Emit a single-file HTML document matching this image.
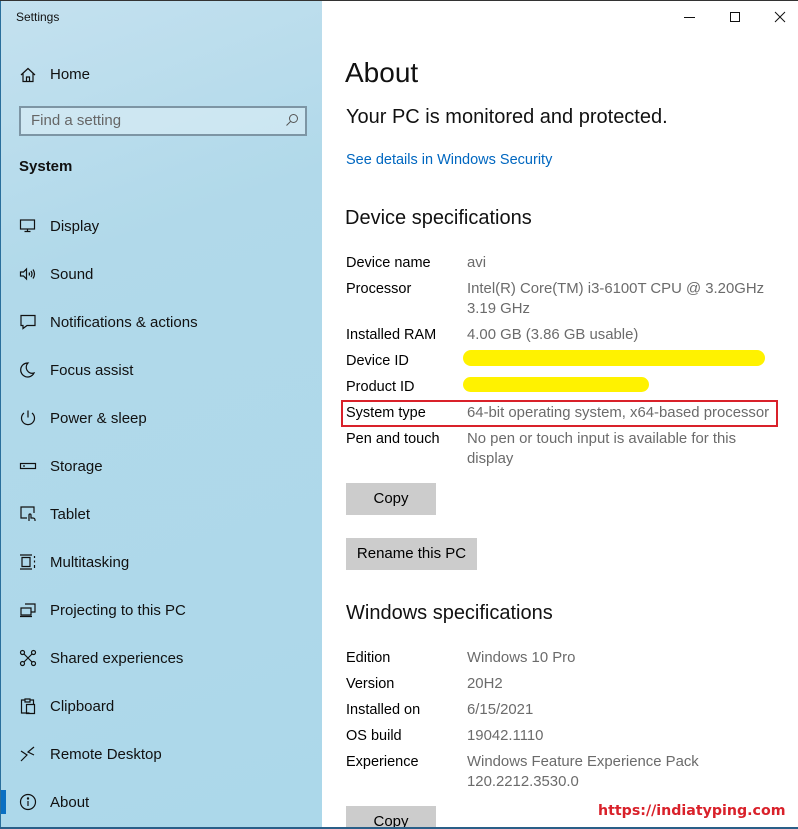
<!DOCTYPE html>
<html><head><meta charset="utf-8"><style>
*{margin:0;padding:0;box-sizing:border-box}
body{width:798px;height:829px;overflow:hidden;font-family:"Segoe UI","Liberation Sans",sans-serif;background:#fff;position:relative;color:#000}
#side{position:absolute;left:0;top:0;width:322px;height:829px;background:linear-gradient(160deg,#c4e1ef 0%,#b1d9ea 30%,#acd8ea 100%);border-left:1px solid #2a6f9c}
.t{position:absolute;white-space:nowrap}
.nav{position:absolute;left:49px;font-size:15px;color:#111;white-space:nowrap;line-height:20px}
.ic{position:absolute;left:18px;width:18px;height:18px}
.lab{position:absolute;left:346px;font-size:14.5px;line-height:20px;white-space:nowrap}
.val{position:absolute;left:467px;font-size:14.9px;line-height:20px;color:#6b6b6b;white-space:nowrap}
.btn{position:absolute;left:346px;background:#cccccc;font-size:15px;text-align:center;line-height:32px;height:32px}
</style></head><body>
<div id="side">
<div class="t" style="left:15px;top:10px;font-size:12px;color:#111">Settings</div>
<svg class="ic" style="top:66px" viewBox="0 0 18 18" fill="none" stroke="#111" stroke-width="1.2"><path d="M2 9L9 2.5 16 9M4 7.5V15.5H14V7.5M7.5 15.5V11H10.5V15.5"/></svg>
<div class="nav" style="top:65px">Home</div>
<div style="position:absolute;left:18px;top:106px;width:288px;height:30px;border:2px solid #7d95a4;background:rgba(220,238,246,.6)"></div>
<div class="t" style="left:30px;top:112px;font-size:15px;color:#666">Find a setting</div>
<svg style="position:absolute;left:284px;top:113px" width="14" height="14" viewBox="0 0 14 14" fill="none" stroke="#555" stroke-width="1"><circle cx="8.5" cy="5.5" r="4"/><path d="M5.5 8.5L1.5 12.5"/></svg>
<div class="t" style="left:18px;top:158px;font-size:15px;font-weight:bold;color:#111">System</div>
<svg class="ic" style="top:217px" viewBox="0 0 18 18" fill="none" stroke="#111" stroke-width="1.2"><rect x="1.5" y="3" width="14" height="9"/><path d="M8.5 12v2.5M5.5 14.5h6"/></svg>
<div class="nav" style="top:217px">Display</div>
<svg class="ic" style="top:265px" viewBox="0 0 18 18" fill="none" stroke="#111" stroke-width="1.2"><path d="M1.5 7h3l3-3v10l-3-3h-3z M10 7.5q1 1.5 0 3 M12 6q2 3 0 6 M14 4.5q3 4.5 0 9"/></svg>
<div class="nav" style="top:265px">Sound</div>
<svg class="ic" style="top:313px" viewBox="0 0 18 18" fill="none" stroke="#111" stroke-width="1.2"><path d="M2 2.5h14v10H8l-4 3v-3H2z"/></svg>
<div class="nav" style="top:313px">Notifications &amp; actions</div>
<svg class="ic" style="top:361px" viewBox="0 0 18 18" fill="none" stroke="#111" stroke-width="1.2"><path d="M9 2a7 7 0 1 0 6 10A6 6 0 0 1 9 2z"/></svg>
<div class="nav" style="top:361px">Focus assist</div>
<svg class="ic" style="top:409px" viewBox="0 0 18 18" fill="none" stroke="#111" stroke-width="1.2"><path d="M9 1.5v7M5 4a6.5 6.5 0 1 0 8 0"/></svg>
<div class="nav" style="top:409px">Power &amp; sleep</div>
<svg class="ic" style="top:457px" viewBox="0 0 18 18" fill="none" stroke="#111" stroke-width="1.2"><rect x="1.5" y="6.5" width="15" height="5"/><path d="M4 9h2"/></svg>
<div class="nav" style="top:457px">Storage</div>
<svg class="ic" style="top:505px" viewBox="0 0 18 18" fill="none" stroke="#111" stroke-width="1.2"><path d="M8 13H2V2h13v6M10 16v-6a1 1 0 0 1 2 0v3h2a2 2 0 0 1 2 2v1"/></svg>
<div class="nav" style="top:505px">Tablet</div>
<svg class="ic" style="top:553px" viewBox="0 0 18 18" fill="none" stroke="#111" stroke-width="1.2"><path d="M1 2h12M1 16h12M3 4.5h8v9H3zM15.5 3v2M15.5 7.5v2M15.5 12v3"/></svg>
<div class="nav" style="top:553px">Multitasking</div>
<svg class="ic" style="top:601px" viewBox="0 0 18 18" fill="none" stroke="#111" stroke-width="1.2"><path d="M6 3h10v8h-4M2 7h10v7H2zM1 15.5h12"/></svg>
<div class="nav" style="top:601px">Projecting to this PC</div>
<svg class="ic" style="top:649px" viewBox="0 0 18 18" fill="none" stroke="#111" stroke-width="1.2"><circle cx="3.5" cy="3.5" r="2"/><circle cx="14.5" cy="3.5" r="2"/><circle cx="3.5" cy="14.5" r="2"/><circle cx="14.5" cy="14.5" r="2"/><path d="M5 5l8 8M13 5l-8 8"/></svg>
<div class="nav" style="top:649px">Shared experiences</div>
<svg class="ic" style="top:697px" viewBox="0 0 18 18" fill="none" stroke="#111" stroke-width="1.2"><path d="M6 3H2.5v13h8M6 2h5v3H6zM11 3h3.5v4M7.5 7.5h8v9h-8z"/></svg>
<div class="nav" style="top:697px">Clipboard</div>
<svg class="ic" style="top:745px" viewBox="0 0 18 18" fill="none" stroke="#111" stroke-width="1.2"><path d="M2 6l6 4-6 6M15 2l-6 5 6 3"/></svg>
<div class="nav" style="top:745px">Remote Desktop</div>
<div style="position:absolute;left:0;top:790px;width:5px;height:24px;background:#0a6fc2"></div>
<svg class="ic" style="top:793px" viewBox="0 0 18 18" fill="none" stroke="#111" stroke-width="1.2"><circle cx="9" cy="9" r="7.5"/><path d="M9 8v5"/><circle cx="9" cy="5.5" r=".6" fill="#111"/></svg>
<div class="nav" style="top:793px">About</div>
</div>
<div style="position:absolute;left:0;top:0;width:798px;height:1px;background:#333"></div>
<div style="position:absolute;left:0;top:827px;width:798px;height:2px;background:#2a5f88"></div>
<svg style="position:absolute;left:682px;top:10px" width="110" height="16" fill="none" stroke="#111" stroke-width="1"><path d="M2 7.5h11M48.5 2.5h9v9h-9zM93 2l10 10M103 2l-10 10"/></svg>
<div class="t" style="left:345px;top:57px;font-size:28px;color:#111">About</div>
<div class="t" style="left:346px;top:106px;font-size:20px;color:#111">Your PC is monitored and protected.</div>
<div class="t" style="left:346px;top:152px;font-size:14.5px;color:#0067c0">See details in Windows Security</div>
<div class="t" style="left:345px;top:207px;font-size:20px;color:#111">Device specifications</div>
<div class="lab" style="top:253px">Device name</div><div class="val" style="top:253px">avi</div>
<div class="lab" style="top:279px">Processor</div><div class="val" style="top:279px">Intel(R) Core(TM) i3-6100T CPU @ 3.20GHz<br>3.19 GHz</div>
<div class="lab" style="top:325px">Installed RAM</div><div class="val" style="top:325px">4.00 GB (3.86 GB usable)</div>
<div class="lab" style="top:351px">Device ID</div>
<div style="position:absolute;left:463px;top:350px;width:302px;height:16px;background:#fff200;border-radius:8px"></div>
<div class="lab" style="top:377px">Product ID</div>
<div style="position:absolute;left:463px;top:377px;width:186px;height:15px;background:#fff200;border-radius:8px"></div>
<div style="position:absolute;left:341px;top:400px;width:437px;height:27px;border:2px solid #d9212a"></div>
<div class="lab" style="top:403px">System type</div><div class="val" style="top:403px">64-bit operating system, x64-based processor</div>
<div class="lab" style="top:429px">Pen and touch</div><div class="val" style="top:429px">No pen or touch input is available for this<br>display</div>
<div class="btn" style="top:483px;width:90px">Copy</div>
<div class="btn" style="top:538px;width:131px">Rename this PC</div>
<div class="t" style="left:346px;top:602px;font-size:20px;color:#111">Windows specifications</div>
<div class="lab" style="top:648px">Edition</div><div class="val" style="top:648px">Windows 10 Pro</div>
<div class="lab" style="top:674px">Version</div><div class="val" style="top:674px">20H2</div>
<div class="lab" style="top:700px">Installed on</div><div class="val" style="top:700px">6/15/2021</div>
<div class="lab" style="top:726px">OS build</div><div class="val" style="top:726px">19042.1110</div>
<div class="lab" style="top:752px">Experience</div><div class="val" style="top:752px">Windows Feature Experience Pack<br>120.2212.3530.0</div>
<div class="btn" style="top:806px;width:90px;height:21px;overflow:hidden;line-height:32px">Copy</div>
<div class="t" style="left:598px;top:803px;font-size:14.2px;font-weight:bold;color:#d9212a;font-family:'DejaVu Sans','Liberation Sans',sans-serif">https://indiatyping.com</div>
</body></html>
